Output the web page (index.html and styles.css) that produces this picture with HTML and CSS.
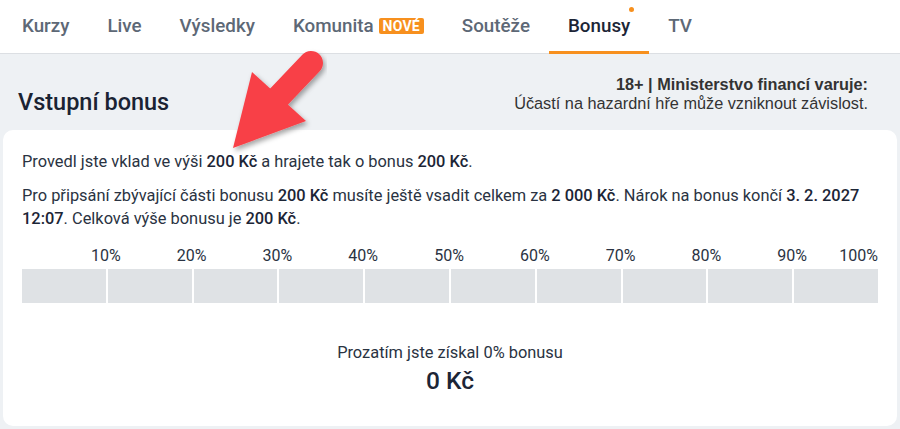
FILE: index.html
```html
<!DOCTYPE html>
<html lang="cs">
<head>
<meta charset="utf-8">
<title>Vstupní bonus</title>
<link rel="stylesheet" href="styles.css">
</head>
<body>
<nav class="nav">
  <a class="tab">Kurzy</a>
  <a class="tab">Live</a>
  <a class="tab">Výsledky</a>
  <a class="tab">Komunita <span class="badge">NOVÉ</span></a>
  <a class="tab">Soutěže</a>
  <a class="tab active"><span class="dotwrap">Bonusy<span class="dot"></span></span></a>
  <a class="tab">TV</a>
</nav>
<main class="page">
  <header class="head">
    <h1 class="title">Vstupní bonus</h1>
    <div class="warn">
      <div class="warn-b">18+ | Ministerstvo financí varuje:</div>
      <div>Účastí na hazardní hře může vzniknout závislost.</div>
    </div>
  </header>
  <section class="card">
    <p class="txt">Provedl jste vklad ve výši <b>200 Kč</b> a hrajete tak o bonus <b>200 Kč</b>.</p>
    <p class="txt">Pro připsání zbývající části bonusu <b>200 Kč</b> musíte ještě vsadit celkem za <b>2 000 Kč</b>. Nárok na bonus končí <b>3. 2. 2027 12:07</b>. Celková výše bonusu je <b>200 Kč</b>.</p>
    <div class="progress">
      <div class="labels">
        <div><span>10%</span></div><div><span>20%</span></div><div><span>30%</span></div><div><span>40%</span></div><div><span>50%</span></div><div><span>60%</span></div><div><span>70%</span></div><div><span>80%</span></div><div><span>90%</span></div><div><span>100%</span></div>
      </div>
      <div class="bar">
        <i></i><i></i><i></i><i></i><i></i><i></i><i></i><i></i><i></i><i></i>
      </div>
    </div>
    <div class="result">
      <div class="res-t">Prozatím jste získal 0% bonusu</div>
      <div class="res-v">0 Kč</div>
    </div>
  </section>
</main>
<svg class="arrow" width="900" height="429" viewBox="0 0 900 429" aria-hidden="true">
  <defs>
    <filter id="sh" x="-20%" y="-20%" width="140%" height="140%">
      <feDropShadow dx="2" dy="3" stdDeviation="2.5" flood-color="#000" flood-opacity="0.35"/>
    </filter>
  </defs>
  <g filter="url(#sh)" fill="#f84147" stroke="none">
    <line x1="311" y1="63" x2="272" y2="104" stroke="#f84147" stroke-width="24" stroke-linecap="round"/>
    <polygon points="233,148 252,72 306,121"/>
  </g>
</svg>
</body>
</html>
```
FILE: styles.css
```css
* { box-sizing: border-box; }
html, body { margin: 0; padding: 0; }
body {
  width: 900px;
  height: 429px;
  overflow: hidden;
  background: #eef1f4;
  font-family: Roboto, "Noto Sans", sans-serif;
  color: #1f2937;
  position: relative;
}
.nav {
  display: flex;
  height: 54px;
  padding-left: 3px;
  background: #fff;
  border-bottom: 1px solid #dcdfe3;
}
.tab {
  display: flex;
  align-items: center;
  gap: 5px;
  padding: 0 19px 1px;
  font-size: 18.8px;
  font-weight: 500;
  color: #5d6876;
  position: relative;
}
.tab.active { color: #1c2536; }
.tab.active::after {
  content: "";
  position: absolute;
  left: 0; right: 0; bottom: -1px;
  height: 3px;
  background: #f7901e;
}
.dotwrap { position: relative; }
.dot {
  position: absolute;
  right: -4px; top: -8px;
  width: 5px; height: 5px;
  border-radius: 50%;
  background: #f7901e;
}
.badge {
  display: inline-block;
  background: #f7901e;
  color: #fff;
  font-size: 14px;
  font-weight: 700;
  line-height: 16px;
  padding: 0 4px;
  border-radius: 2px;
  letter-spacing: 0.2px;
}
.page { padding: 0 3px; }
.head {
  display: flex;
  justify-content: space-between;
  align-items: flex-end;
  padding: 21px 29px 17px 15px;
}
.title {
  margin: 0 0 -3px;
  font-size: 23.5px;
  font-weight: 500;
  line-height: 28px;
  color: #1a2333;
}
.warn {
  text-align: right;
  font-family: "Liberation Sans", Arial, sans-serif;
  font-size: 16.3px;
  line-height: 19px;
  color: #333;
}
.warn-b { font-weight: 700; }
.card {
  background: #fff;
  border-radius: 10px;
  padding: 20px 19px 0;
  height: 296px;
}
.txt {
  margin: 0 0 11px;
  font-size: 16.4px;
  line-height: 23px;
  color: #2a3342;
}
.txt b { font-weight: 500; color: #1c2536; }
.progress { margin-top: 16px; }
.labels {
  display: grid;
  grid-template-columns: repeat(10, 1fr);
  gap: 2px;
  font-size: 16px;
  line-height: 20px;
  color: #2a3342;
}
.labels div { text-align: right; }
.labels span { display: inline-block; transform: translateX(50%); }
.labels div:last-child span { transform: none; }
.bar {
  display: grid;
  grid-template-columns: repeat(10, 1fr);
  gap: 2px;
  height: 34px;
  margin-top: 3px;
}
.bar i { background: #dfe2e5; }
.result {
  margin-top: 38px;
  text-align: center;
}
.res-t { font-size: 16.4px; line-height: 23px; color: #2a3342; }
.res-v { font-size: 24.5px; font-weight: 500; line-height: 30px; color: #1c2536; margin-top: 2px; }
.arrow {
  position: absolute;
  left: 0; top: 0;
  pointer-events: none;
}
```
